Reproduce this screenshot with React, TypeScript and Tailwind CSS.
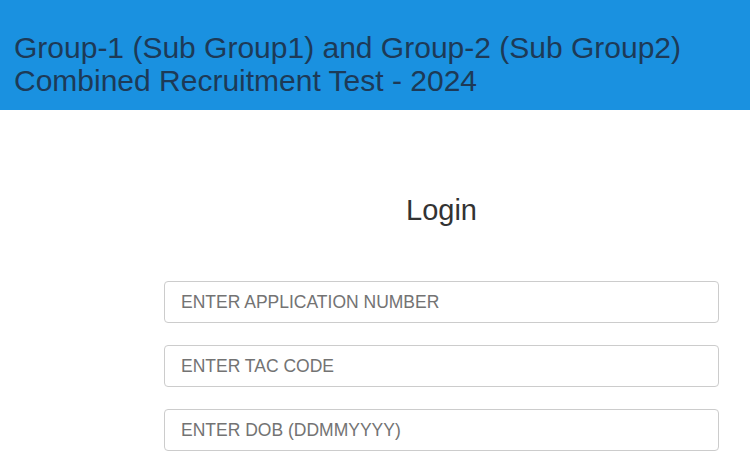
export default function App() {
  const inputCls =
    'w-full h-[42px] rounded-[4px] border border-[#cccccc] bg-white px-4 text-[17.5px] text-[#555] placeholder-[#737373] focus:outline-none';

  return (
    <div className="min-h-[468px] w-[750px] bg-white font-['Liberation_Sans',Arial,sans-serif]">
      <header className="h-[110px] bg-[#1a91e0] pl-[14px] pt-[31px]">
        <h1 className="text-[30px] font-normal leading-[33px] text-[#1d3a57]">
          Group-1 (Sub Group1) and Group-2 (Sub Group2)
          <br />
          Combined Recruitment Test - 2024
        </h1>
      </header>

      <main className="ml-[164px] w-[555px] pt-[82px]">
        <h2 className="text-center text-[29px] leading-[36px] text-[#333]">Login</h2>
        <div className="mt-[53px] flex flex-col gap-[22px]">
          <input className={inputCls} placeholder="ENTER APPLICATION NUMBER" />
          <input className={inputCls} placeholder="ENTER TAC CODE" />
          <input className={inputCls} placeholder="ENTER DOB (DDMMYYYY)" />
        </div>
      </main>
    </div>
  );
}
